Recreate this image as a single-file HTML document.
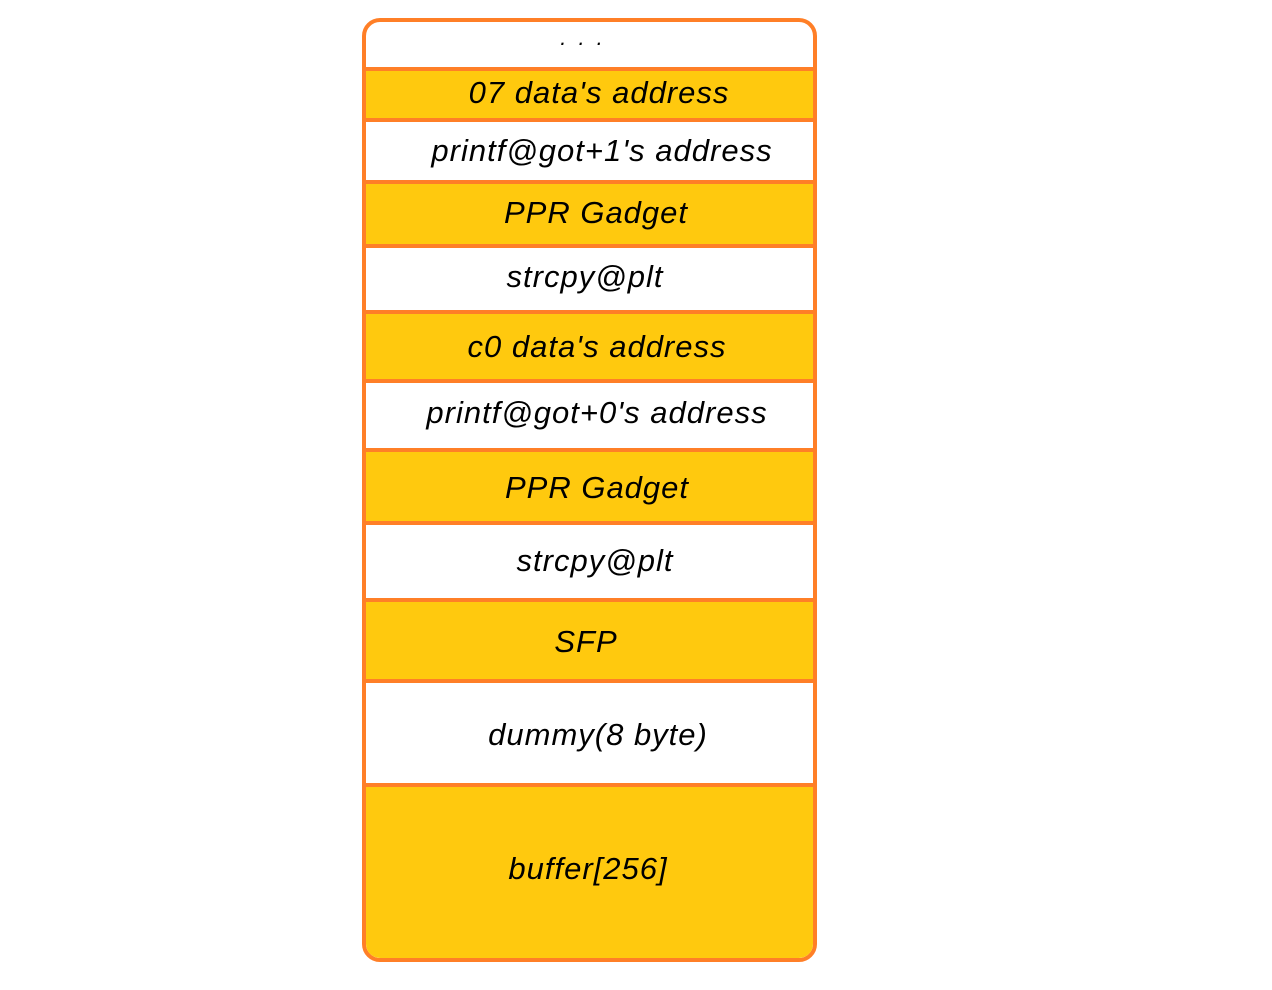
<!DOCTYPE html><html><head><style>
body{margin:0;width:1272px;height:990px;background:#fff;position:relative;overflow:hidden;font-family:"Liberation Sans",sans-serif;font-style:italic}
.box{position:absolute;left:362px;top:18px;width:447px;height:936px;border:4px solid #FF7F27;border-radius:18px;overflow:hidden;background:#fff}
.r{position:absolute;left:0;width:100%}
.y{background:#FFC90E}
.d{position:absolute;left:0;width:100%;height:4px;background:#FF7F27}
.t{position:absolute;font-size:31px;color:#000;transform:translate(-50%,-50%);white-space:nowrap;letter-spacing:1px}
</style></head><body>
<div class="box">
<div class="r y" style="top:49px;height:51px"></div>
<div class="r y" style="top:162px;height:64px"></div>
<div class="r y" style="top:292px;height:69px"></div>
<div class="r y" style="top:430px;height:73px"></div>
<div class="r y" style="top:580px;height:81px"></div>
<div class="r y" style="top:765px;height:180px"></div>
<div class="d" style="top:45px"></div>
<div class="d" style="top:96px"></div>
<div class="d" style="top:158px"></div>
<div class="d" style="top:222px"></div>
<div class="d" style="top:288px"></div>
<div class="d" style="top:357px"></div>
<div class="d" style="top:426px"></div>
<div class="d" style="top:499px"></div>
<div class="d" style="top:576px"></div>
<div class="d" style="top:657px"></div>
<div class="d" style="top:761px"></div>
</div>
<div class="t" style="left:583px;top:38px;font-size:22px;letter-spacing:3px">. . .</div>
<div class="t" style="left:599px;top:93px">07 data's address</div>
<div class="t" style="left:602px;top:151px">printf@got+1's address</div>
<div class="t" style="left:596px;top:213px">PPR Gadget</div>
<div class="t" style="left:585px;top:277px">strcpy@plt</div>
<div class="t" style="left:597px;top:347px">c0 data's address</div>
<div class="t" style="left:597px;top:413px">printf@got+0's address</div>
<div class="t" style="left:597px;top:488px">PPR Gadget</div>
<div class="t" style="left:595px;top:561px">strcpy@plt</div>
<div class="t" style="left:586px;top:642px">SFP</div>
<div class="t" style="left:598px;top:735px">dummy(8 byte)</div>
<div class="t" style="left:588px;top:869px">buffer[256]</div>
</body></html>
